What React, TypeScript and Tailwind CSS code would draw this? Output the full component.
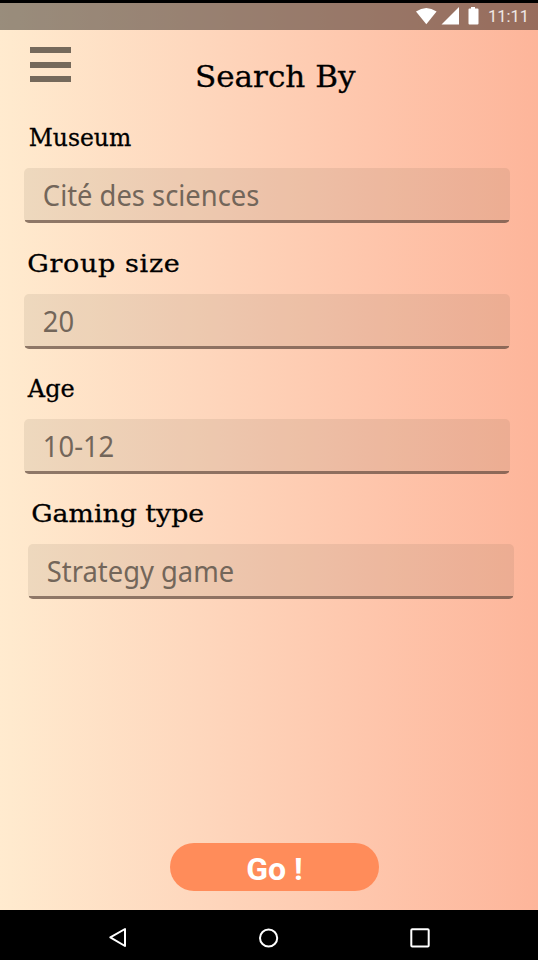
type FieldProps = {
  label: string;
  value: string;
  labelClass: string;
  className: string;
};

function Field({ label, value, labelClass, className }: FieldProps) {
  return (
    <div className={`w-[486px] ${className}`}>
      <label className={`block h-[46px] origin-left pt-px font-['DejaVu_Serif',serif] text-[25px] leading-[30px] whitespace-nowrap text-black [-webkit-text-stroke:0.3px_black] ${labelClass}`}>
        {label}
      </label>
      <div className="flex h-[55px] flex-col overflow-hidden rounded-[5px] bg-[#5c4b36]/10">
        <span className="flex-1 origin-left scale-x-[0.943] pt-[7px] pl-5 font-['Noto_Sans',sans-serif] text-[29px] leading-[40px] whitespace-nowrap text-[#73665a]">{value}</span>
        <span className="mx-px h-[3px] bg-[#5a4439]/65" />
      </div>
    </div>
  );
}

export default function App() {
  return (
    <div className="flex h-[960px] w-[538px] flex-col overflow-hidden bg-black pt-[3px]">
      <div className="flex min-h-0 flex-1 flex-col bg-[linear-gradient(90deg,#ffebcf_0%,#fed7bd_37%,#fec5ab_70%,#fdb59a_100%)]">
        <header className="flex h-[27px] shrink-0 items-center justify-end bg-black/40 pr-[9px] text-white">
          <svg width="66" height="27" viewBox="0 0 66 27" fill="currentColor">
            <path d="M0 8.5Q10.3 1.3 20.6 8.5L10.3 21.3Z" />
            <path d="M25.5 21.5H43V4Z" />
            <path d="M55 4h4v1.6h2.5q1 0 1 1v14q0 1-1 1h-8q-1 0-1-1v-14q0-1 1-1H55Z" />
          </svg>
          <span className="ml-[6px] font-[Roboto,sans-serif] text-[16.5px] leading-5 text-white/85">11:11</span>
        </header>

        <div className="flex h-[92px] shrink-0 pt-[17px] pl-[30px]">
          <button aria-label="Menu" className="flex h-[35px] w-[41px] flex-col justify-between">
            <span className="h-[6px] w-full bg-[#75695b]" />
            <span className="h-[6px] w-full bg-[#75695b]" />
            <span className="h-[6px] w-full bg-[#75695b]" />
          </button>
          <h1 className="mt-[10px] ml-[124px] origin-left scale-x-[1.07] font-['DejaVu_Serif',serif] text-[29px] leading-[40px] whitespace-nowrap text-black [-webkit-text-stroke:0.3px_black]">Search By</h1>
        </div>

        <main className="flex flex-1 flex-col">
          <Field label="Museum" value="Cité des sciences" labelClass="scale-x-[0.94] pl-[5px]" className="ml-6" />
          <Field label="Group size" value="20" labelClass="scale-x-[1.08] pl-[3px] tracking-[0.6px]" className="mt-[25px] ml-6" />
          <Field label="Age" value="10-12" labelClass="scale-x-[0.96] pl-1" className="mt-[24px] ml-6" />
          <Field label="Gaming type" value="Strategy game" labelClass="scale-x-[1.07] pl-[3px]" className="mt-[24px] ml-7" />
        </main>

        <button className="mb-[19px] ml-[170px] flex h-[48px] w-[209px] shrink-0 items-center justify-center rounded-full bg-[#ff8c5a] pt-1 font-[Roboto,sans-serif] text-[32px] leading-none font-bold text-white">
          Go !
        </button>
      </div>
      <nav className="flex h-[50px] shrink-0 items-center bg-black pt-[6px] pl-[108px] text-white">
        <svg width="323" height="22" viewBox="0 0 323 22" fill="none" stroke="currentColor" strokeWidth="2" strokeLinejoin="round">
          <path d="M2.3 10.3 17 2v17Z" />
          <circle cx="160.6" cy="11" r="8.6" />
          <rect x="303.3" y="2.3" width="17.4" height="17.2" rx="1" />
        </svg>
      </nav>
    </div>
  );
}
